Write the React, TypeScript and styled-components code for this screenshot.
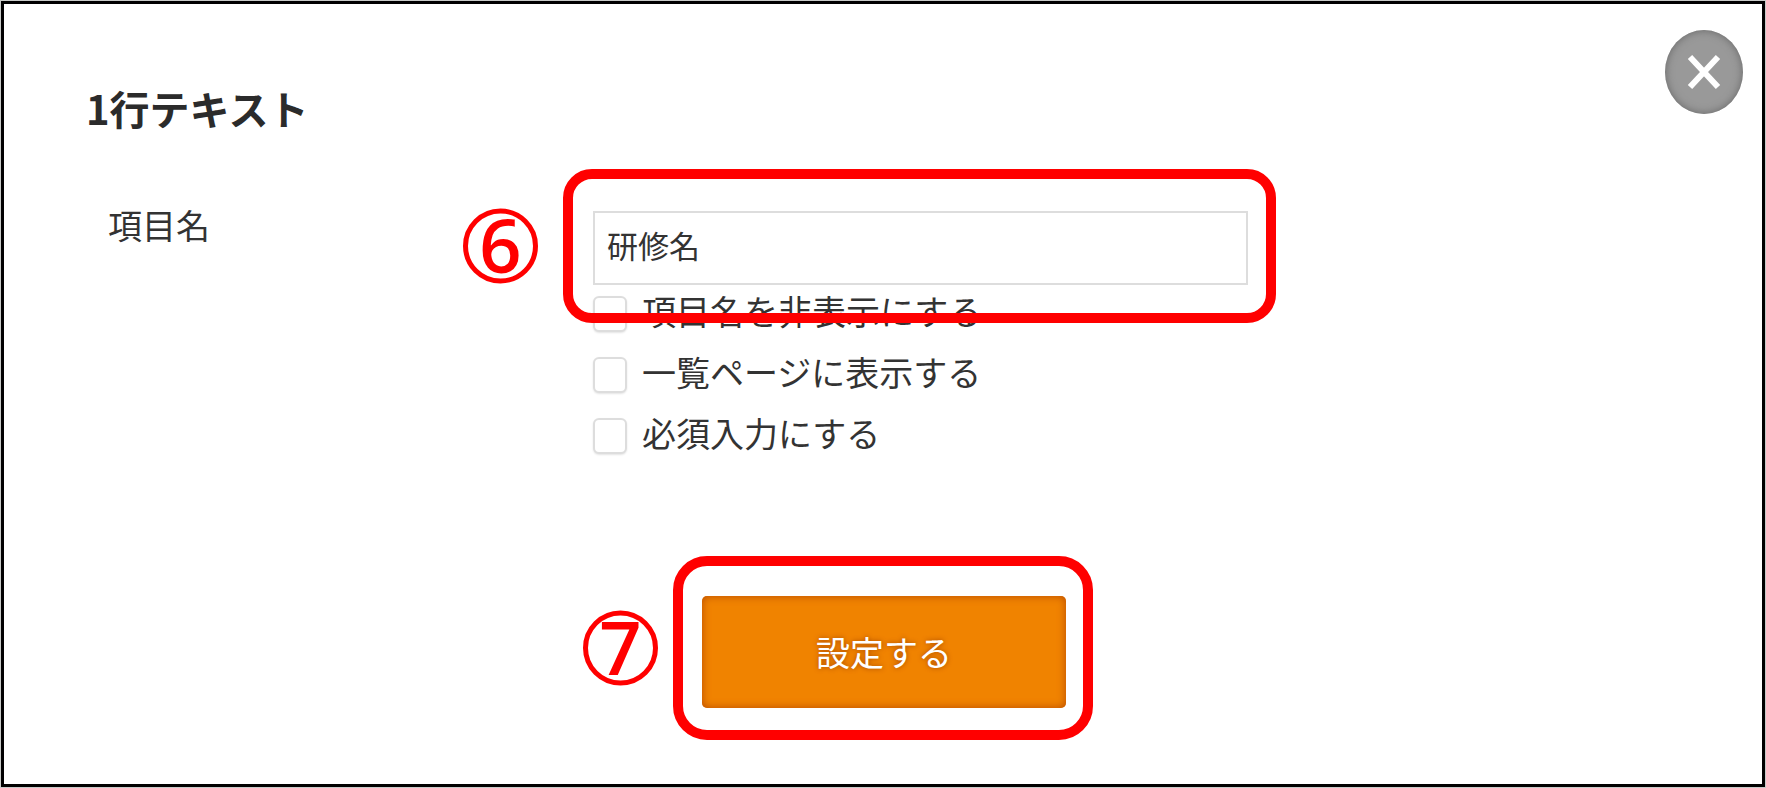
import React from "react";
import styled, { createGlobalStyle } from "styled-components";

const GlobalStyle = createGlobalStyle`
  *, *::before, *::after { box-sizing: border-box; }
  body {
    margin: 0;
    padding: 1px;
    background: #c8cac8;
    color: #333;
    font-family: "Noto Sans CJK JP", sans-serif;
  }
`;

const Dialog = styled.main`
  position: relative;
  min-height: calc(100vh - 2px);
  padding: 75px 80px 72px 82px;
  border: 3px solid #000;
  background: #fff;
`;

const Title = styled.h1`
  margin: 0 0 74px;
  font-size: 40px;
  line-height: 58px;
  font-weight: 700;
  color: #2b2b2b;
`;

const CloseButton = styled.button`
  position: absolute;
  top: 26px;
  right: 19px;
  width: 78px;
  height: 84px;
  padding: 0;
  border: 0;
  border-radius: 50%;
  background: #999;
  box-shadow: inset 0 0 8px #666;
  cursor: pointer;

  svg {
    display: block;
    margin: 0 auto;
  }
`;

const FieldRow = styled.div`
  display: grid;
  grid-template-columns: 485px minmax(0, 655px);
  margin-left: 22px;
`;

const FieldLabel = styled.label`
  font-size: 34px;
  line-height: 28px;
`;

const Anchor = styled.div`
  position: relative;
`;

const TextInput = styled.input`
  display: block;
  width: 100%;
  height: 74px;
  padding: 0 12px 8px;
  border: 2px solid #ddd;
  border-radius: 0;
  background: #fff;
  color: #333;
  font-family: inherit;
  font-size: 31px;
  outline: none;
`;

const CheckRow = styled.label`
  display: flex;
  align-items: center;
  gap: 15px;
  height: 61px;
  padding-bottom: 4px;
  font-size: 34px;
  line-height: 34px;
`;

const CheckText = styled.span`
  padding-bottom: 6px;
`;

const CheckBox = styled.input`
  appearance: none;
  flex: none;
  width: 34px;
  height: 36px;
  margin: 0;
  border: 2px solid #ddd;
  border-radius: 6px;
  background: #fff;
  box-shadow: 0 1px 2px #e4e4e4;

  &:checked {
    background: #f08300;
  }
`;

const Actions = styled.div`
  display: flex;
  justify-content: center;
  margin-top: 128px;
`;

const SubmitButton = styled.button`
  display: block;
  width: 364px;
  height: 112px;
  padding: 0;
  border: 0;
  border-radius: 5px;
  background: #f08300;
  box-shadow: inset 0 0 8px #b84a00;
  color: #fff;
  font-family: inherit;
  font-size: 34px;
  line-height: 34px;
  text-shadow: 0 0 5px #a84800;
  cursor: pointer;
`;

const CalloutFrame = styled.div<{ $inset: string; $radius: number }>`
  position: absolute;
  z-index: 1;
  inset: ${(p) => p.$inset};
  border: 10px solid #f00;
  border-radius: ${(p) => p.$radius}px;
  pointer-events: none;
`;

const CalloutNumber = styled.span<{ $gap: number }>`
  position: absolute;
  top: 50%;
  right: calc(100% + ${(p) => p.$gap}px);
  display: flex;
  align-items: center;
  justify-content: center;
  width: 75px;
  height: 75px;
  padding-bottom: 4px;
  border: 5px solid #f00;
  border-radius: 50%;
  transform: translateY(-50%);
  color: #f00;
  font-family: "Open Sans", sans-serif;
  font-size: 74px;
  line-height: 60px;
  font-weight: 600;
`;

type CalloutProps = { step: number; inset: string; radius: number; gap: number };

const Callout = ({ step, inset, radius, gap }: CalloutProps) => (
  <CalloutFrame $inset={inset} $radius={radius}>
    <CalloutNumber $gap={gap + 10}>{step}</CalloutNumber>
  </CalloutFrame>
);

const options = ["項目名を非表示にする", "一覧ページに表示する", "必須入力にする"];

export default function App() {
  return (
    <>
      <GlobalStyle />
      <Dialog>
        <CloseButton type="button" aria-label="閉じる">
          <svg width="36" height="38" viewBox="0 0 36 38" fill="none" stroke="#fff" strokeWidth="6">
            <path d="M4 4 32 34M32 4 4 34" />
          </svg>
        </CloseButton>
        <Title>1行テキスト</Title>
        <FieldRow>
          <FieldLabel htmlFor="item-name">項目名</FieldLabel>
          <div>
            <Anchor>
              <TextInput id="item-name" type="text" defaultValue="研修名" />
              <Callout step={6} inset="-42px -28px -38px -30px" radius={29} gap={25} />
            </Anchor>
            {options.map((text) => (
              <CheckRow key={text}>
                <CheckBox type="checkbox" />
                <CheckText>{text}</CheckText>
              </CheckRow>
            ))}
          </div>
        </FieldRow>
        <Actions>
          <Anchor>
            <SubmitButton type="button">設定する</SubmitButton>
            <Callout step={7} inset="-40px -27px -32px -29px" radius={34} gap={15} />
          </Anchor>
        </Actions>
      </Dialog>
    </>
  );
}
